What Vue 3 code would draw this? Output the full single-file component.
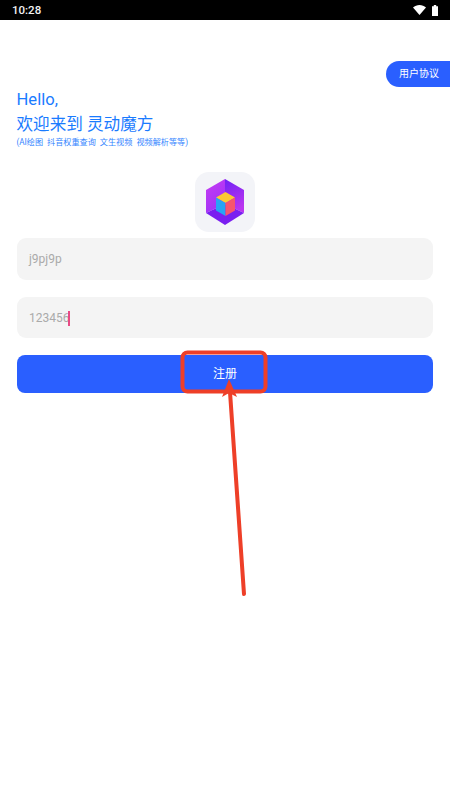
<template>
  <div class="page">
    <div class="status-bar">
      <span class="clock">10:28</span>
      <div class="status-icons">
        <svg width="13" height="10" viewBox="0 0 13 10"><path d="M0 2.6C1.8 1 4 0 6.5 0S11.2 1 13 2.6L6.5 10Z" fill="#fff"/></svg>
        <svg width="6" height="11" viewBox="0 0 6 11"><path d="M0 1.2h1.8V0h2.4v1.2H6V11H0Z" fill="#fff"/></svg>
      </div>
    </div>

    <div class="agreement-row">
      <div class="agreement">用户协议</div>
    </div>

    <div class="intro">
      <div class="hello">Hello,</div>
      <div class="welcome">欢迎来到 灵动魔方</div>
      <div class="features">(AI绘图&nbsp; 抖音权重查询&nbsp; 文生视频&nbsp; 视频解析等等)</div>
    </div>

    <div class="logo">
      <svg width="40" height="46" viewBox="0 0 40 46">
        <defs>
          <linearGradient id="wallLeft" x1="0" y1="0" x2="0.5" y2="1">
            <stop offset="0" stop-color="#c83cf2" />
            <stop offset="1" stop-color="#a032f8" />
          </linearGradient>
          <linearGradient id="wallRight" x1="0" y1="0" x2="0.3" y2="1">
            <stop offset="0" stop-color="#6f22f5" />
            <stop offset="1" stop-color="#bb35f0" />
          </linearGradient>
        </defs>
        <path d="M20 0 1 11v23l19-9Z" fill="url(#wallLeft)" />
        <path d="M20 0l19 11v23L20 25Z" fill="url(#wallRight)" />
        <path d="M1 34l19-9 19 9-19 12Z" fill="#7a1ff0" />
        <path d="M20.5 13l9.5 5.5-9.5 5.5-9.5-5.5Z" fill="#fdc933" />
        <path d="M11 18.5l9.5 5.5v13L11 31.5Z" fill="#27a4f5" />
        <path d="M30 18.5 20.5 24v13L30 31.5Z" fill="#f8556e" />
      </svg>
    </div>

    <div class="form">
      <div class="field">j9pj9p</div>
      <div class="field">123456<span class="caret"></span></div>
      <div class="submit">注册</div>
    </div>

    <svg class="annotation" width="450" height="800" viewBox="0 0 450 800">
      <rect x="182.5" y="352.5" width="83" height="39" rx="5" fill="none" stroke="#ee3f28" stroke-width="4" />
      <path d="M244 594 230 392" fill="none" stroke="#ee3f28" stroke-width="4" stroke-linecap="round" />
      <path d="M229 379 222 397 229 393 237 397Z" fill="#ee3f28" />
    </svg>
  </div>
</template>

<script setup>
</script>

<style>
html, body {
  margin: 0;
  background: #fff;
}
</style>

<style scoped>
.page {
  position: relative;
  width: 450px;
  height: 800px;
  overflow: hidden;
  background: #fff;
  font-family: Roboto, "Noto Sans CJK SC", sans-serif;
}

.status-bar {
  height: 20px;
  box-sizing: border-box;
  padding: 0 12px;
  display: flex;
  align-items: center;
  justify-content: space-between;
  background: #000;
  color: #f2f2f2;
}

.clock {
  font-size: 11.5px;
  font-weight: 500;
}

.status-icons {
  display: flex;
  align-items: center;
  gap: 6px;
}

.agreement-row {
  display: flex;
  justify-content: flex-end;
  margin-top: 41px;
}

.agreement {
  width: 64px;
  height: 26px;
  box-sizing: border-box;
  padding-left: 13px;
  border-radius: 13px 0 0 13px;
  background: #2a5fff;
  color: #fff;
  font-size: 10px;
  line-height: 26px;
}

.intro {
  margin-top: 1px;
  padding-left: 16.5px;
  color: #1a7bff;
}

.hello,
.welcome {
  font-size: 16.6px;
  line-height: 24px;
}

.welcome {
  margin-top: 1px;
}

.features {
  font-size: 8.15px;
  line-height: 12px;
  margin-top: -1px;
  color: #3385ff;
}

.logo {
  width: 60px;
  height: 60px;
  margin: 24px auto 0;
  border-radius: 14px;
  background: #f3f4f8;
  display: flex;
  align-items: center;
  justify-content: center;
}

.form {
  margin-top: 6px;
  padding: 0 17px;
  display: flex;
  flex-direction: column;
}

.field {
  height: 41.5px;
  box-sizing: border-box;
  padding-left: 12px;
  margin-bottom: 17px;
  border-radius: 9px;
  background: #f4f4f4;
  color: #aaa;
  font-size: 12px;
  line-height: 43px;
}

.caret {
  display: inline-block;
  width: 1.5px;
  height: 15px;
  margin-left: -1px;
  vertical-align: middle;
  background: #e84a84;
}

.submit {
  height: 38px;
  border-radius: 8px;
  background: #2a5fff;
  color: #fff;
  font-size: 12px;
  line-height: 38px;
  text-align: center;
}

.annotation {
  position: absolute;
  left: 0;
  top: 0;
  pointer-events: none;
}
</style>
